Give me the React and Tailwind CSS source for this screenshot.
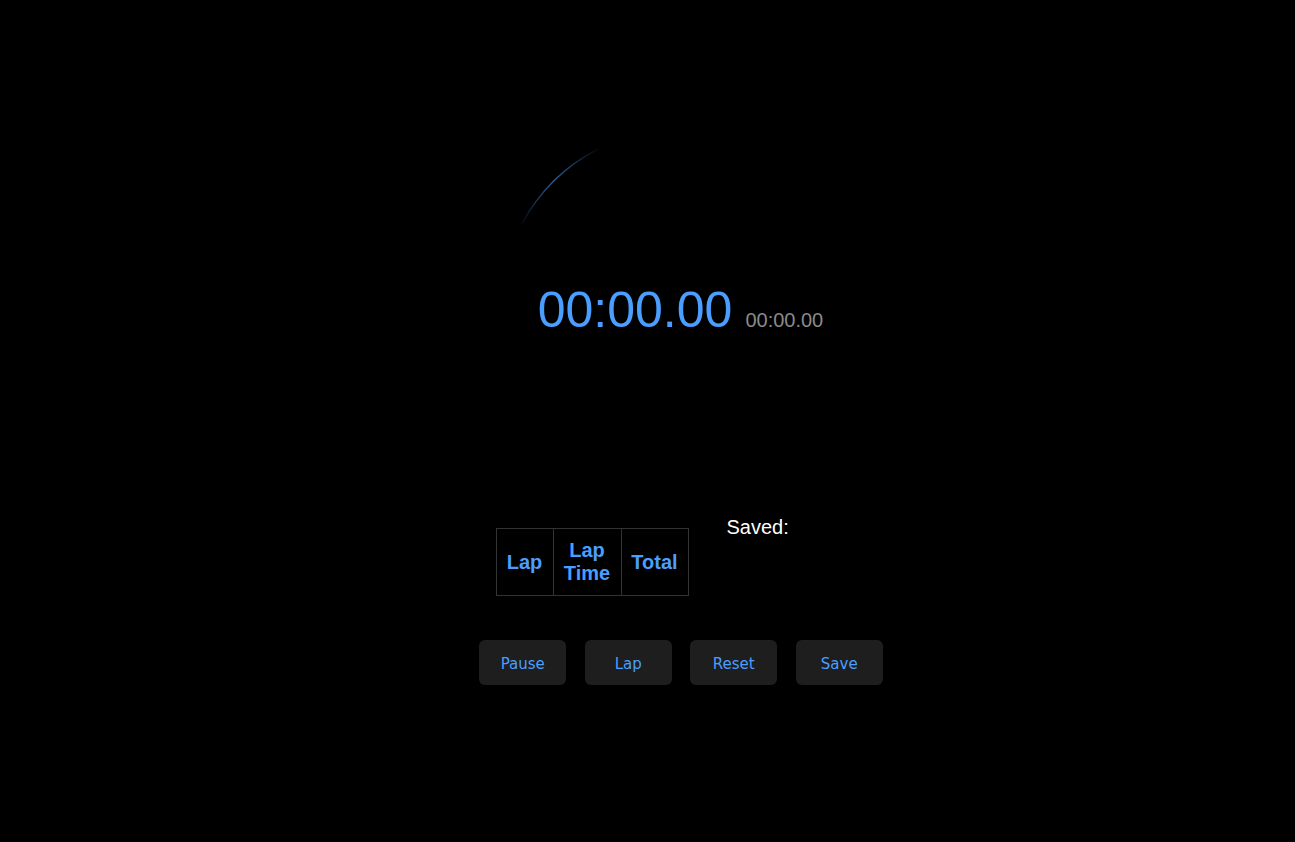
import { useState } from 'react'

// Decorative progress ring behind the clock
function Ring() {
  return (
    <svg width="364" height="364" viewBox="0 0 364 364" className="absolute inset-0">
      <defs>
        <linearGradient id="arcFade" gradientUnits="userSpaceOnUse" x1="20" y1="100" x2="102" y2="18">
          <stop offset="0" stopColor="#4a9eff" stopOpacity="0" />
          <stop offset="0.5" stopColor="#4a9eff" stopOpacity="0.6" />
          <stop offset="1" stopColor="#4a9eff" stopOpacity="0" />
        </linearGradient>
      </defs>
      <path d="M 22.2 97.1 A 181 181 0 0 1 99.8 20.7" fill="none" stroke="url(#arcFade)" strokeWidth="1.3" />
    </svg>
  )
}

export default function App() {
  const [laps] = useState([])
  const [saved] = useState([])

  return (
    <div className="min-h-screen bg-black text-white font-['Liberation_Sans',Arial,sans-serif]">
      <div className="flex flex-col items-center pt-[128px] pl-[67px]">
        {/* Clock */}
        <div className="relative w-[364px] h-[364px] flex items-center justify-center">
          <Ring />
          <div className="relative flex items-baseline -ml-px">
            <span className="text-[50px] leading-[57px] text-[#4a9eff]">00:00.00</span>
            <span className="ml-[13px] text-[20px] text-[#8a8a8a]">00:00.00</span>
          </div>
        </div>

        {/* Laps + saved */}
        <div className="flex items-start gap-[38px] mt-[23px]">
          <table className="mt-[13px] border-collapse table-fixed w-[192px]">
            <thead>
              <tr>
                <th className="w-[57px] border border-[#333] py-2.5 text-[20px] leading-[23px] font-bold text-[#4a9eff]">Lap</th>
                <th className="w-[68px] border border-[#333] py-2.5 px-2.5 text-[20px] leading-[23px] font-bold text-[#4a9eff]">Lap Time</th>
                <th className="w-[67px] border border-[#333] py-2.5 text-[20px] leading-[23px] font-bold text-[#4a9eff]">Total</th>
              </tr>
            </thead>
            <tbody>
              {laps.map((l, i) => (
                <tr key={i}><td>{l}</td></tr>
              ))}
            </tbody>
          </table>
          <div className="w-[140px]">
            <h3 className="text-[20px] leading-[23px] mt-px">Saved:</h3>
            <ul>
              {saved.map((s, i) => <li key={i}>{s}</li>)}
            </ul>
          </div>
        </div>

        {/* Controls */}
        <div className="flex gap-[18.5px] mt-[44px] font-['DejaVu_Sans',sans-serif]">
          {['Pause', 'Lap', 'Reset', 'Save'].map(b => (
            <button key={b} className="w-[87px] h-[45px] pt-[3px] rounded-md bg-[#1e1e1e] text-[15px] text-[#4a9eff]">{b}</button>
          ))}
        </div>
      </div>
    </div>
  )
}
